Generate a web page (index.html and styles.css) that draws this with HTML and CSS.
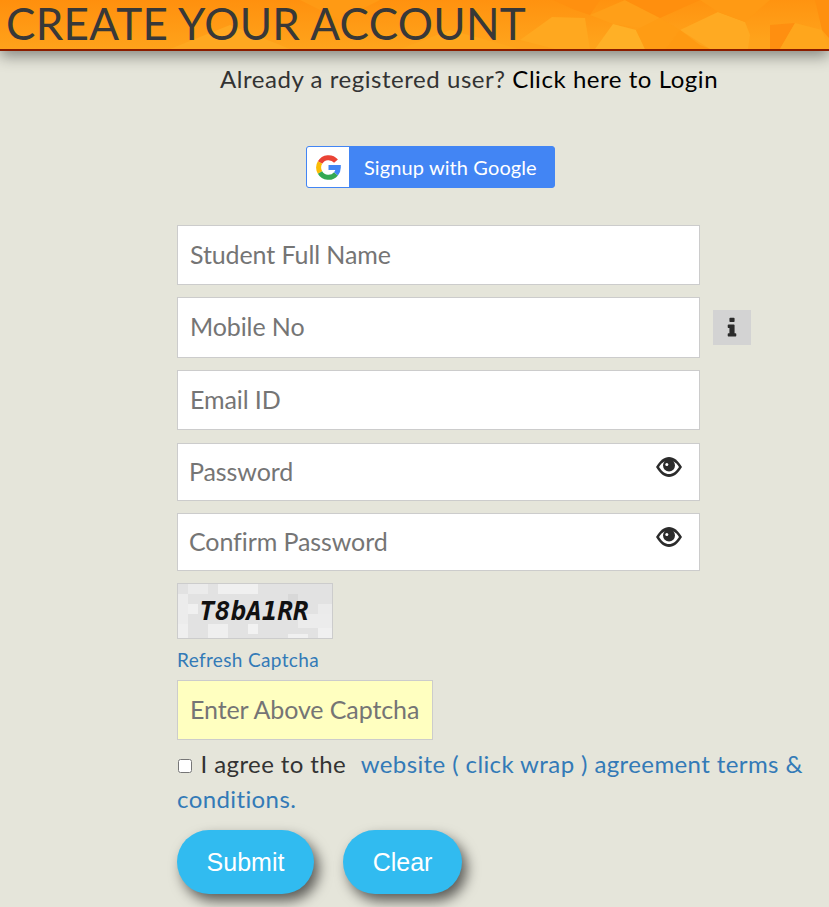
FILE: index.html
```html
<!DOCTYPE html>
<html lang="en">
<head>
  <meta charset="UTF-8" />
  <meta name="viewport" content="width=device-width, initial-scale=1.0"/>
  <title>Create Your Account</title>
  <link rel="stylesheet" href="styles.css">
</head>
<body>

  <header class="top-bar">
    <svg class="top-texture" viewBox="0 0 829 49" preserveAspectRatio="none" aria-hidden="true">
      <defs>
        <linearGradient id="topShade" x1="0" y1="0" x2="0.25" y2="1">
          <stop offset="0" stop-color="#ff8f0d"/>
          <stop offset="1" stop-color="#ffa31b"/>
        </linearGradient>
      </defs>
      <rect width="829" height="49" fill="url(#topShade)"/>
      <polygon points="170,49 230,25 290,49" fill="#ffa820"/>
      <polygon points="300,0 380,0 340,20" fill="#ff9a14"/>
      <polygon points="400,49 450,30 520,49" fill="#ffa61c"/>
      <polygon points="520,40 552,17 585,18 590,49 555,49" fill="#ffa81f"/>
      <polygon points="553,0 600,0 590,15 575,10" fill="#ff900f"/>
      <polygon points="590,15 625,0 660,18 640,28 613,24" fill="#ff9f18"/>
      <polygon points="625,0 700,0 660,18" fill="#ff8f0e"/>
      <polygon points="595,49 613,24 636,30 645,49" fill="#ffb026"/>
      <polygon points="660,18 680,30 665,49 645,49 636,30" fill="#ff9c14"/>
      <polygon points="680,30 718,12 745,22 750,35 748,49 710,49" fill="#ffaa22"/>
      <polygon points="665,49 680,30 700,45 710,49" fill="#ff9a12"/>
      <polygon points="700,0 770,0 745,22 718,12" fill="#ff9a14"/>
      <polygon points="770,25 795,23 780,49 770,49" fill="#ff8f10"/>
      <polygon points="795,23 822,30 829,49 780,49" fill="#ffa61c"/>
      <polygon points="815,0 829,0 829,38 822,30" fill="#ff900f"/>
    </svg>
    <h1 class="page-title">CREATE YOUR ACCOUNT</h1>
  </header>

  <p class="login-line">Already a registered user? <a href="#" class="login-link">Click here to Login</a></p>

  <div class="google-wrap">
    <a href="#" class="google-btn">
      <span class="google-icon">
        <svg width="25" height="25" viewBox="0 0 25 25" fill="none" stroke-width="5" aria-hidden="true">
          <path stroke="#ea4335" d="M20 6.200A9.800 9.800 0 0 0 4 7.600"/>
          <path stroke="#fbbc05" d="M4 7.600A9.800 9.800 0 0 0 4 17.400"/>
          <path stroke="#34a853" d="M4 17.400A9.800 9.800 0 0 0 20 18.800"/>
          <path stroke="#4285f4" d="M20 18.800A9.800 9.800 0 0 0 22.300 12.500H12.500"/>
        </svg>
      </span>
      <span class="google-text">Signup with Google</span>
    </a>
  </div>

  <form class="signup-form">
    <div class="field-row">
      <input type="text" class="field field-name" placeholder="Student Full Name" />
    </div>
    <div class="field-row">
      <input type="text" class="field field-mobile" placeholder="Mobile No" />
      <span class="info-btn">
        <svg width="24" height="24" viewBox="0 0 1792 1792" aria-hidden="true"><path fill="#2b2b2b" d="M1216 1344v128q0 26-19 45t-45 19h-512q-26 0-45-19t-19-45v-128q0-26 19-45t45-19h64v-384h-64q-26 0-45-19t-19-45v-128q0-26 19-45t45-19h384q26 0 45 19t19 45v576h64q26 0 45 19t19 45zm-128-1152v192q0 26-19 45t-45 19h-256q-26 0-45-19t-19-45v-192q0-26 19-45t45-19h256q26 0 45 19t19 45z"/></svg>
      </span>
    </div>
    <div class="field-row email-row">
      <input type="text" class="field field-name" placeholder="Email ID" />
    </div>
    <div class="field-row">
      <div class="password-box">
        <input type="text" class="field field-short" placeholder="Password" />
        <svg class="eye-icon" width="26" height="20" viewBox="0 0 26 20" aria-hidden="true">
          <path fill="#2b2b2b" d="M0 10C4 3.500 8 0 13 0s9 3.500 13 10c-4 6.500-8 10-13 10S4 16.500 0 10z"/>
          <path fill="#fff" d="M3 10c1.800-2.800 3.500-4.500 5.500-5.500h9c2 1 3.700 2.700 5.500 5.500-3 4.500-6 7-10 7s-7-2.500-10-7z"/>
          <circle fill="#2b2b2b" cx="13" cy="8.500" r="6"/>
          <circle fill="#fff" cx="10.800" cy="7.500" r="1.500"/>
        </svg>
      </div>
    </div>
    <div class="field-row">
      <div class="password-box">
        <input type="text" class="field field-short" placeholder="Confirm Password" />
        <svg class="eye-icon" width="26" height="20" viewBox="0 0 26 20" aria-hidden="true">
          <path fill="#2b2b2b" d="M0 10C4 3.500 8 0 13 0s9 3.500 13 10c-4 6.500-8 10-13 10S4 16.500 0 10z"/>
          <path fill="#fff" d="M3 10c1.800-2.800 3.500-4.500 5.500-5.500h9c2 1 3.700 2.700 5.500 5.500-3 4.500-6 7-10 7s-7-2.500-10-7z"/>
          <circle fill="#2b2b2b" cx="13" cy="8.500" r="6"/>
          <circle fill="#fff" cx="10.800" cy="7.500" r="1.500"/>
        </svg>
      </div>
    </div>

    <div class="captcha-box">
      <svg class="captcha-noise" viewBox="0 0 154 54" aria-hidden="true">
        <rect width="154" height="54" fill="#e2e2e2"/>
        <rect x="10" y="0" width="20" height="10" fill="#ebebeb"/>
        <rect x="40" y="0" width="40" height="10" fill="#f0f0f0"/>
        <rect x="0" y="10" width="10" height="30" fill="#ececec"/>
        <rect x="10" y="20" width="10" height="10" fill="#f0f0f0"/>
        <rect x="110" y="10" width="10" height="10" fill="#d8d8d8"/>
        <rect x="140" y="20" width="14" height="10" fill="#ebebeb"/>
        <rect x="120" y="30" width="34" height="14" fill="#ececec"/>
        <rect x="140" y="44" width="14" height="10" fill="#f0f0f0"/>
        <rect x="0" y="40" width="10" height="14" fill="#efefef"/>
        <rect x="30" y="40" width="20" height="14" fill="#efefef"/>
        <rect x="70" y="40" width="10" height="10" fill="#f2f2f2"/>
        <rect x="110" y="50" width="20" height="4" fill="#f0f0f0"/>
      </svg>
      <span class="captcha-text">T8bA1RR</span>
    </div>
    <a href="#" class="refresh-link">Refresh Captcha</a>
    <input type="text" class="field captcha-input" placeholder="Enter Above Captcha" />

    <p class="agree-line">
      <input type="checkbox" class="agree-check" />
      <span>I agree to the</span>
      <a href="#" class="agree-link">website ( click wrap ) agreement terms &amp;</a>
      <a href="#" class="agree-link-end">conditions.</a>
    </p>

    <div class="btn-row">
      <button type="button" class="pill-btn submit-btn">Submit</button>
      <button type="button" class="pill-btn clear-btn">Clear</button>
    </div>
  </form>

</body>
</html>
```

FILE: styles.css
```css
* {
  box-sizing: border-box;
}

body {
  margin: 0;
  height: 907px;
  overflow: hidden;
  background-color: #e5e5da;
  color: #333;
  font-family: Lato, "Open Sans", sans-serif;
}

.top-bar {
  position: relative;
  height: 51px;
  border-bottom: 2px solid #8a1c00;
  box-shadow: 0 5px 14px rgba(0, 0, 0, 0.42);
}

.top-texture {
  position: absolute;
  left: 0;
  top: 0;
  width: 100%;
  height: 100%;
}

.page-title {
  position: relative;
  margin: 0;
  padding-left: 6px;
  font-size: 44px;
  font-weight: 400;
  letter-spacing: 0.3px;
  line-height: 47px;
  color: #383838;
  white-space: nowrap;
}

.login-line {
  margin: 14px 0 0 220px;
  font-size: 24px;
  letter-spacing: 0.55px;
  line-height: 28px;
  color: #333;
}

.login-link {
  color: #000;
  text-decoration: none;
}

.google-wrap {
  margin: 53px 0 0 306px;
}

.google-btn {
  display: flex;
  width: 249px;
  height: 42px;
  border: 1px solid #4285f4;
  border-radius: 3px;
  background-color: #4285f4;
  color: #fff;
  text-decoration: none;
  overflow: hidden;
}

.google-icon {
  display: flex;
  align-items: center;
  justify-content: center;
  width: 42px;
  background-color: #fff;
}

.google-text {
  margin-left: 15px;
  font-size: 20px;
  letter-spacing: 0.1px;
  line-height: 40px;
}

.signup-form {
  margin: 37px 0 0 177px;
  width: 640px;
}

.field-row {
  display: flex;
  align-items: center;
  margin-bottom: 12px;
}

.email-row {
  margin-bottom: 13px;
}

.field {
  display: block;
  width: 523px;
  padding: 0 12px 3px;
  border: 1px solid #ccc;
  background-color: #fff;
  font-family: Lato, "Open Sans", sans-serif;
  font-size: 25px;
  letter-spacing: -0.1px;
  color: #333;
}

.field::placeholder {
  color: #757575;
  opacity: 1;
}

.field-name {
  height: 60px;
}

.field-mobile {
  height: 61px;
}

.field-short {
  height: 58px;
  padding-left: 11px;
}

.info-btn {
  display: flex;
  align-items: center;
  justify-content: center;
  width: 38px;
  height: 35px;
  margin-left: 13px;
  background-color: #d3d3d3;
}

.password-box {
  position: relative;
  width: 523px;
}

.eye-icon {
  position: absolute;
  right: 18px;
  top: 14px;
}

.captcha-box {
  display: flex;
  align-items: center;
  justify-content: center;
  position: relative;
  width: 156px;
  height: 56px;
  padding-right: 2px;
  border: 1px solid #ccc;
}

.captcha-noise {
  position: absolute;
  left: 0;
  top: 0;
  width: 100%;
  height: 100%;
}

.captcha-text {
  position: relative;
  font-family: "DejaVu Sans Mono", monospace;
  font-size: 26px;
  font-weight: bold;
  font-style: italic;
  color: #111;
}

.refresh-link {
  display: block;
  margin-top: 9px;
  font-size: 19px;
  letter-spacing: 0.35px;
  line-height: 24px;
  color: #337ab7;
  text-decoration: none;
}

.captcha-input {
  width: 256px;
  height: 60px;
  margin-top: 8px;
  background-color: #ffffc0;
}

.agree-line {
  margin: 6px 0 0;
  font-size: 24px;
  letter-spacing: 0.4px;
  line-height: 35px;
  color: #333;
}

.agree-check {
  width: 14px;
  height: 14px;
  margin: 0 2px 4px 1px;
}

.agree-link {
  margin-left: 8px;
  color: #337ab7;
  text-decoration: none;
}

.agree-link-end {
  color: #337ab7;
  text-decoration: none;
}

.btn-row {
  display: flex;
  gap: 29px;
  margin-top: 14px;
}

.pill-btn {
  height: 64px;
  border: none;
  border-radius: 32px;
  background-color: #31bbf0;
  color: #fff;
  font-family: "Liberation Sans", Arial, sans-serif;
  font-size: 25px;
  box-shadow: 5px 7px 13px rgba(0, 0, 0, 0.6);
}

.submit-btn {
  width: 137px;
}

.clear-btn {
  width: 119px;
}
```
